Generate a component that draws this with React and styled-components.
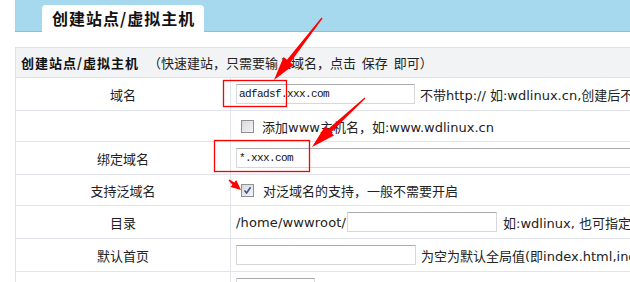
import React from 'react';
import styled, { createGlobalStyle } from 'styled-components';

const GlobalStyle = createGlobalStyle`
	html, body {
		margin: 0;
		padding: 0;
		background: #fff;
		overflow: hidden;
	}
	body {
		font-family: "DejaVu Sans", "Noto Sans CJK SC", sans-serif;
		font-size: 13px;
		color: #222;
	}
`;

const Page = styled.div`
	position: relative;
	width: 630px;
	height: 282px;
	padding-left: 15px;
	box-sizing: border-box;
	overflow: hidden;
`;

const Banner = styled.div`
	display: flex;
	align-items: flex-end;
	height: 32px;
	box-sizing: border-box;
	padding-left: 27px;
	background: #a6d8ee;
	border-bottom: 1px solid #84c1e0;
	width: 900px;
`;

const Tab = styled.div`
	height: 27px;
	margin-bottom: -1px;
	padding: 0 9px 0 10px;
	background: #fff;
	border-radius: 4px 4px 0 0;
	font-family: "Noto Sans CJK SC", sans-serif;
	font-size: 16px;
	font-weight: 700;
	letter-spacing: 1px;
	line-height: 27px;
	color: #111;
`;

const Table = styled.div`
	margin-top: 15px;
	width: 900px;
	border-top: 1px solid #dfe2e8;
	border-left: 1px solid #dfe2e8;
`;

const HeaderRow = styled.div`
	display: flex;
	align-items: center;
	height: 30px;
	box-sizing: border-box;
	padding-left: 5px;
	background: #f2f3f5;
	border-bottom: 1px solid #dfe2e8;
	font-family: "Noto Sans CJK SC", sans-serif;
	white-space: pre;
`;

const HeaderTitle = styled.b`
	letter-spacing: 1px;
	color: #111;
`;

const HeaderNote = styled.span`
	margin-left: 9px;
	color: #222;
`;

const Row = styled.div`
	display: grid;
	grid-template-columns: 215px 1fr;
	height: ${(p) => (p.$tall ? 33 : 31)}px;
	box-sizing: border-box;
	border-bottom: 1px solid #e1e4ea;
`;

const Label = styled.div`
	display: flex;
	align-items: center;
	justify-content: center;
	border-right: 1px solid #e1e4ea;
	font-family: "Noto Sans CJK SC", sans-serif;
	color: #222;
`;

const Cell = styled.div`
	display: flex;
	align-items: center;
	padding-left: 5px;
	white-space: nowrap;
`;

const Input = styled.input`
	width: ${(p) => p.$w}px;
	height: 20px;
	box-sizing: border-box;
	margin: 0 0 0 ${(p) => p.$ml || 0}px;
	padding: 0 2px;
	border: 1px solid #d5d7db;
	border-top-color: #a9abae;
	border-radius: 1px;
	background: #fff;
	font-family: "Liberation Mono", monospace;
	font-size: 11px;
	letter-spacing: -0.6px;
	color: #111;
	outline: none;
`;

const Note = styled.span`
	margin-left: ${(p) => p.$ml || 5}px;
	color: #222;
`;

const Path = styled.span`
	letter-spacing: 0.15px;
`;

const Box = styled.span`
	display: inline-flex;
	align-items: center;
	justify-content: center;
	width: 13px;
	height: 13px;
	box-sizing: border-box;
	margin-left: 5px;
	border: 1px solid #8e9091;
	background: linear-gradient(135deg, #d8d9db 0%, #f4f4f5 100%);
`;

const Overlay = styled.svg`
	position: absolute;
	top: 0;
	left: 0;
	pointer-events: none;
`;

const Checkbox = ({ checked }) => (
	<Box>
		{checked && (
			<svg width="9" height="9" viewBox="0 0 9 9">
				<path d="M1.5 4.5 L3.6 7 L7.6 1.2" fill="none" stroke="#3b4f9c" strokeWidth="1.6" />
			</svg>
		)}
	</Box>
);

const arrowPoints = (x1, y1, x2, y2, headLen, headW, shaftW) => {
	const dx = x2 - x1;
	const dy = y2 - y1;
	const len = Math.hypot(dx, dy);
	const ux = dx / len;
	const uy = dy / len;
	const nx = -uy;
	const ny = ux;
	const bx = x2 - ux * headLen;
	const by = y2 - uy * headLen;
	const pts = [
		[x1 + nx * 0.6, y1 + ny * 0.6],
		[bx + nx * shaftW, by + ny * shaftW],
		[bx + nx * headW, by + ny * headW],
		[x2, y2],
		[bx - nx * headW, by - ny * headW],
		[bx - nx * shaftW, by - ny * shaftW],
		[x1 - nx * 0.6, y1 - ny * 0.6],
	];
	return pts.map((p) => p.map((v) => v.toFixed(1)).join(',')).join(' ');
};

const Annotations = () => (
	<Overlay width="630" height="282">
		<rect x="223.5" y="80.5" width="63" height="26" fill="none" stroke="#f00" strokeWidth="1.3" />
		<rect x="214.5" y="140.5" width="95" height="31" fill="none" stroke="#f00" strokeWidth="1.3" />
		<polygon points={arrowPoints(322, 18, 274, 80, 24, 6.5, 2.2)} fill="#f00" />
		<polygon points={arrowPoints(365, 98, 312, 147, 24, 6.5, 2.2)} fill="#f00" />
		<polygon points={arrowPoints(229, 180, 241, 190, 10, 4.5, 1.5)} fill="#f00" />
	</Overlay>
);

export default function App() {
	return (
		<Page>
			<GlobalStyle />
			<Banner>
				<Tab>创建站点/虚拟主机</Tab>
			</Banner>
			<Table>
				<HeaderRow>
					<HeaderTitle>创建站点/虚拟主机</HeaderTitle>
					<HeaderNote>（快速建站，只需要输入域名，点击  保存  即可）</HeaderNote>
				</HeaderRow>
				<Row $tall>
					<Label>域名</Label>
					<Cell>
						<Input $w={179} defaultValue="adfadsf.xxx.com" />
						<Note>不带http:// 如:wdlinux.cn,创建后不可修改</Note>
					</Cell>
				</Row>
				<Row>
					<Label />
					<Cell>
						<Checkbox />
						<Note $ml={8}>添加www主机名，如:www.wdlinux.cn</Note>
					</Cell>
				</Row>
				<Row $tall>
					<Label>绑定域名</Label>
					<Cell>
						<Input $w={620} defaultValue="*.xxx.com" />
					</Cell>
				</Row>
				<Row>
					<Label>支持泛域名</Label>
					<Cell>
						<Checkbox checked />
						<Note $ml={9}>对泛域名的支持，一般不需要开启</Note>
					</Cell>
				</Row>
				<Row $tall>
					<Label>目录</Label>
					<Cell>
						<Path>/home/wwwroot/</Path>
						<Input $w={150} $ml={1} />
						<Note $ml={6}>如:wdlinux, 也可指定绝对路径</Note>
					</Cell>
				</Row>
				<Row $tall>
					<Label>默认首页</Label>
					<Cell>
						<Input $w={180} />
						<Note>为空为默认全局值(即index.html,index.php)</Note>
					</Cell>
				</Row>
				<Row $tall>
					<Label>访问日志</Label>
					<Cell>
						<Input $w={79} />
					</Cell>
				</Row>
			</Table>
			<Annotations />
		</Page>
	);
}
